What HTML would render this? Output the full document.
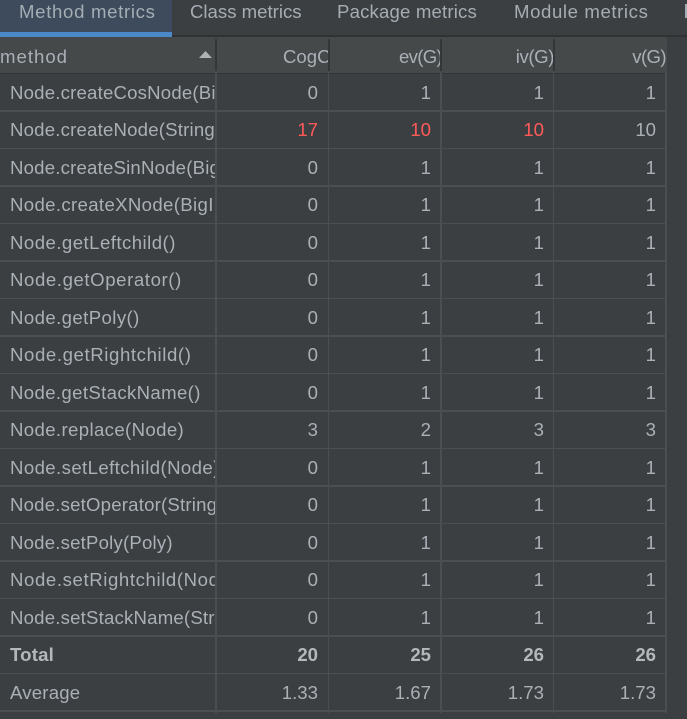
<!DOCTYPE html>
<html><head><meta charset="utf-8"><style>
html,body{margin:0;padding:0;background:#3c3f41}
body{width:687px;height:719px;position:relative;overflow:hidden;font-family:"Liberation Sans",sans-serif;font-size:18.6px;color:#a9b0b6}
.a{position:absolute}
.t{position:absolute;top:0;height:24px;line-height:24px;font-size:18.6px;color:#a5adb4;white-space:nowrap}
.h{position:absolute;left:0;width:666px;background:#4d4e4f}
.v{position:absolute;top:73px;height:640px;background:#4d4e4f}
.s{position:absolute;top:39px;height:32px;width:2px;background:#34373a}
.r{position:absolute;left:0;width:666px;height:37px;line-height:37px}
.r span{position:absolute;top:0;text-align:right;white-space:nowrap}
.r span:nth-child(1){left:10px;width:205px;text-align:left;overflow:hidden;letter-spacing:.2px}
.r span:nth-child(2){left:217px;width:101px}
.r span:nth-child(3){left:330px;width:101px}
.r span:nth-child(4){left:443px;width:101px}
.r span:nth-child(5){left:555px;width:101px}
.b{font-weight:bold;color:#b4b8bb}
.e{color:#ff5a5a}
.hd{position:absolute;top:38px;height:35px;line-height:37px;white-space:nowrap;color:#a9b0b6;overflow:hidden;text-align:right}
</style></head><body>
<div class="a" style="left:0;top:0;width:172px;height:32px;background:#3d4b5c"></div>
<div class="a" style="left:0;top:32px;width:172px;height:5px;background:#4a88c7"></div>
<div class="a" style="left:172px;top:35px;width:515px;height:2px;background:#323232"></div>
<div class="t" style="left:19px;letter-spacing:.68px">Method metrics</div>
<div class="t" style="left:190px;letter-spacing:0">Class metrics</div>
<div class="t" style="left:337px;letter-spacing:.17px">Package metrics</div>
<div class="t" style="left:514px;letter-spacing:.6px">Module metrics</div>
<div class="a" style="left:685px;top:4px;width:2px;height:14px;background:#a5adb4"></div>

<div class="a" style="left:0;top:37px;width:667px;height:36px;background:#45494a"></div>
<div class="a" style="left:0;top:73px;width:667px;height:1px;background:#323438"></div>
<div class="hd" style="left:0;width:100px;text-align:left;letter-spacing:1px">method</div>
<svg class="a" style="left:198px;top:50px" width="15" height="9"><path d="M7.5 1 L14 8 H1 Z" fill="#afb1b3"/></svg>
<div class="hd" style="left:220px;width:109px;text-align:left"><span style="position:absolute;left:63px">CogC</span></div>
<div class="hd" style="left:340px;width:102px;letter-spacing:-.7px">ev(G)</div>
<div class="hd" style="left:453px;width:101px;letter-spacing:-.4px">iv(G)</div>
<div class="hd" style="left:565px;width:101px;letter-spacing:-.6px">v(G)</div>
<div class="s" style="left:215px"></div>
<div class="s" style="left:328px"></div>
<div class="s" style="left:440px"></div>
<div class="s" style="left:553px"></div>

<div class="v" style="left:215px;width:2px"></div>
<div class="v" style="left:328px;width:1px"></div>
<div class="v" style="left:440px;width:2px"></div>
<div class="v" style="left:553px;width:1px"></div>
<div class="v" style="left:665px;width:2px"></div>

<div class="h" style="top:110px;height:2px"></div>
<div class="h" style="top:148px;height:1px"></div>
<div class="h" style="top:185px;height:2px"></div>
<div class="h" style="top:223px;height:1px"></div>
<div class="h" style="top:260px;height:2px"></div>
<div class="h" style="top:298px;height:1px"></div>
<div class="h" style="top:335px;height:2px"></div>
<div class="h" style="top:373px;height:1px"></div>
<div class="h" style="top:410px;height:2px"></div>
<div class="h" style="top:448px;height:1px"></div>
<div class="h" style="top:485px;height:2px"></div>
<div class="h" style="top:523px;height:1px"></div>
<div class="h" style="top:560px;height:2px"></div>
<div class="h" style="top:598px;height:1px"></div>
<div class="h" style="top:635px;height:2px"></div>
<div class="h" style="top:673px;height:1px"></div>
<div class="h" style="top:710px;height:2px;width:667px"></div>

<div class="r" style="top:74px"><span>Node.createCosNode(BigInteger)</span><span>0</span><span>1</span><span>1</span><span>1</span></div>
<div class="r" style="top:111px"><span>Node.createNode(String)</span><span class="e">17</span><span class="e">10</span><span class="e">10</span><span>10</span></div>
<div class="r" style="top:149px"><span>Node.createSinNode(BigInteger)</span><span>0</span><span>1</span><span>1</span><span>1</span></div>
<div class="r" style="top:186px"><span style="letter-spacing:.35px">Node.createXNode(BigInteger)</span><span>0</span><span>1</span><span>1</span><span>1</span></div>
<div class="r" style="top:224px"><span style="letter-spacing:.46px">Node.getLeftchild()</span><span>0</span><span>1</span><span>1</span><span>1</span></div>
<div class="r" style="top:261px"><span style="letter-spacing:.59px">Node.getOperator()</span><span>0</span><span>1</span><span>1</span><span>1</span></div>
<div class="r" style="top:299px"><span style="letter-spacing:.41px">Node.getPoly()</span><span>0</span><span>1</span><span>1</span><span>1</span></div>
<div class="r" style="top:336px"><span style="letter-spacing:.6px">Node.getRightchild()</span><span>0</span><span>1</span><span>1</span><span>1</span></div>
<div class="r" style="top:374px"><span style="letter-spacing:.36px">Node.getStackName()</span><span>0</span><span>1</span><span>1</span><span>1</span></div>
<div class="r" style="top:411px"><span style="letter-spacing:.37px">Node.replace(Node)</span><span>3</span><span>2</span><span>3</span><span>3</span></div>
<div class="r" style="top:449px"><span style="letter-spacing:.4px">Node.setLeftchild(Node)</span><span>0</span><span>1</span><span>1</span><span>1</span></div>
<div class="r" style="top:486px"><span>Node.setOperator(String)</span><span>0</span><span>1</span><span>1</span><span>1</span></div>
<div class="r" style="top:524px"><span>Node.setPoly(Poly)</span><span>0</span><span>1</span><span>1</span><span>1</span></div>
<div class="r" style="top:561px"><span style="letter-spacing:.6px">Node.setRightchild(Node)</span><span>0</span><span>1</span><span>1</span><span>1</span></div>
<div class="r" style="top:599px"><span>Node.setStackName(String)</span><span>0</span><span>1</span><span>1</span><span>1</span></div>
<div class="r b" style="top:636px"><span>Total</span><span>20</span><span>25</span><span>26</span><span>26</span></div>
<div class="r" style="top:674px"><span>Average</span><span>1.33</span><span>1.67</span><span>1.73</span><span>1.73</span></div>
</body></html>
